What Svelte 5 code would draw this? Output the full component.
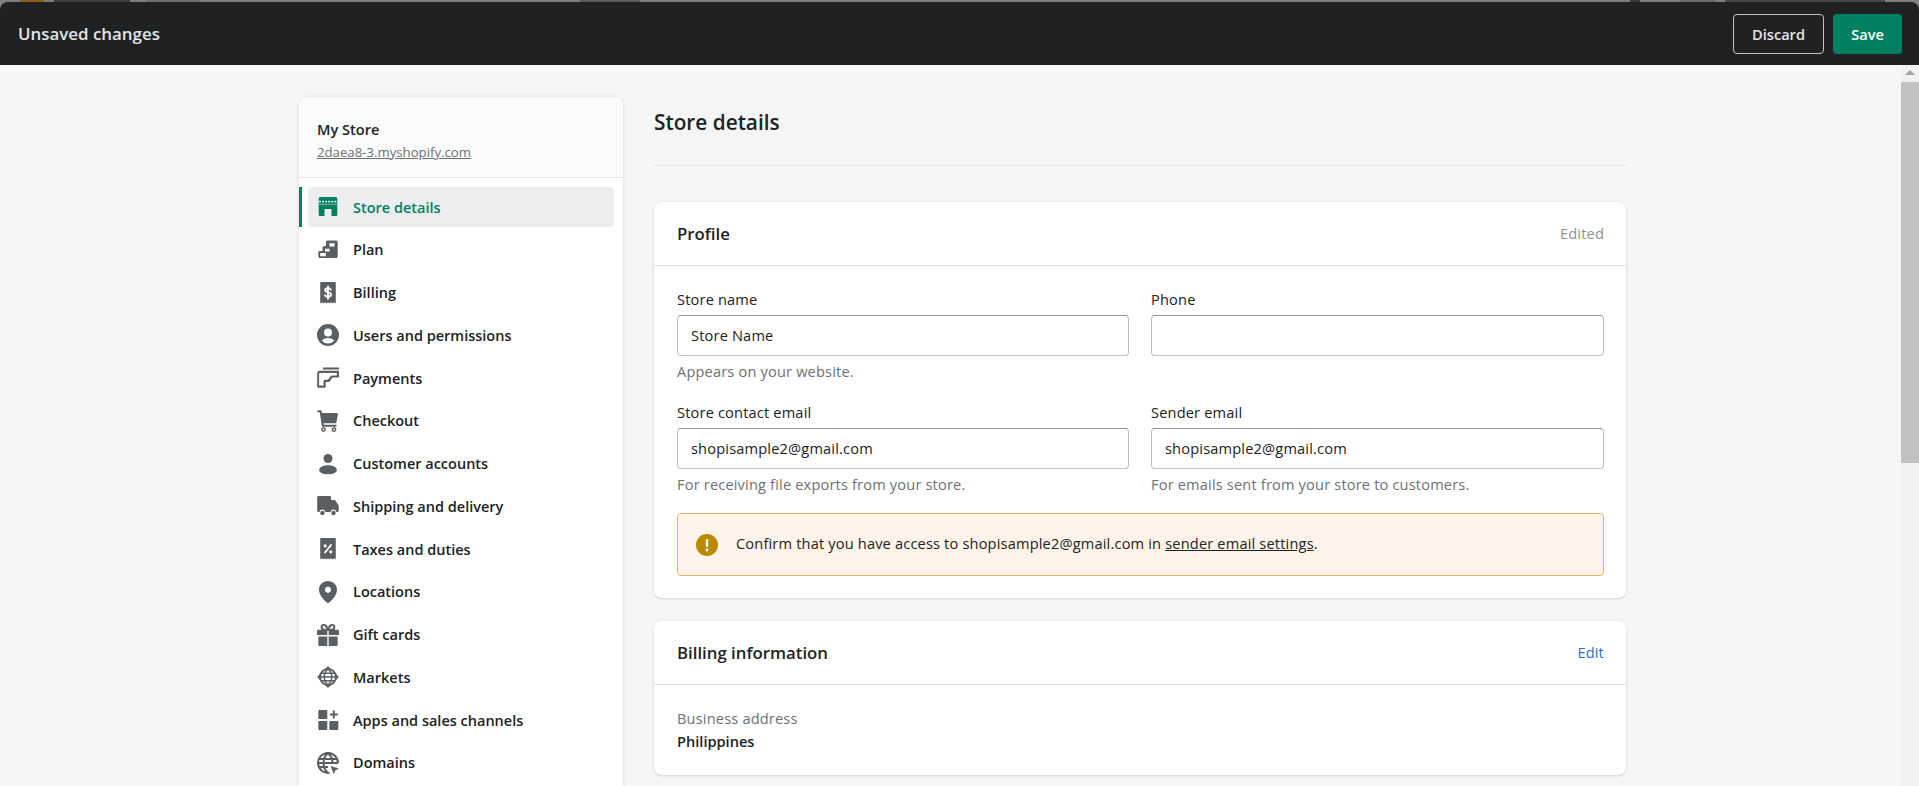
<script>
  const nav = [
    { label: 'Store details', icon: 'store', active: true },
    { label: 'Plan', icon: 'plan' },
    { label: 'Billing', icon: 'billing' },
    { label: 'Users and permissions', icon: 'users' },
    { label: 'Payments', icon: 'payments' },
    { label: 'Checkout', icon: 'cart' },
    { label: 'Customer accounts', icon: 'person' },
    { label: 'Shipping and delivery', icon: 'truck' },
    { label: 'Taxes and duties', icon: 'taxes' },
    { label: 'Locations', icon: 'pin' },
    { label: 'Gift cards', icon: 'gift' },
    { label: 'Markets', icon: 'markets' },
    { label: 'Apps and sales channels', icon: 'apps' },
    { label: 'Domains', icon: 'domains' }
  ];
</script>

<div class="page">
  <header class="top">
    <div class="bar">
      <span class="bar-title">Unsaved changes</span>
      <div class="actions">
        <button class="btn discard">Discard</button>
        <button class="btn save">Save</button>
      </div>
    </div>
  </header>

  <div class="under">
    <div class="content">
      <aside class="side">
        <div class="side-head">
          <div class="shop">My Store</div>
          <a class="shop-url" href="#top">2daea8-3.myshopify.com</a>
        </div>
        <nav class="nav">
          {#each nav as item}
            <a class="row" class:active={item.active} href="#top">
              <svg class="ico" viewBox="0 0 22 22" aria-hidden="true">
                {#if item.icon === 'store'}
                  <path d="M3.500 1h15a1.800 1.800 0 0 1 1.800 1.800v16a1.200 1.200 0 0 1-1.200 1.200h-4.600v-7h-7v7H2.900a1.200 1.200 0 0 1-1.200-1.200v-16A1.800 1.800 0 0 1 3.500 1z" />
                  <path class="notch" d="M2 5.600h18" />
                  <path class="gap" d="M2 8.300h18" />
                {:else if item.icon === 'plan'}
                  <path d="M10.600 1.500h8.600a1.500 1.500 0 0 1 1.500 1.500v14.500a1.500 1.500 0 0 1-1.500 1.500H2.800a1.500 1.500 0 0 1-1.500-1.500v-4a1.500 1.500 0 0 1 1-1.400V12h3.200V8.500a1.500 1.500 0 0 1 1.500-1.500H9V3a1.500 1.500 0 0 1 1.600-1.500z" />
                  <path class="cut" d="M12.500 4.300h5v3.200h-5zM8 9.800h4.500v2.600H8zM3.200 14h5.600v3.200H3.200z" />
                {:else if item.icon === 'billing'}
                  <path d="M4 0h14a.8.800 0 0 1 .8.800v20.700l-1.560-1.200-1.560 1.200-1.560-1.200-1.560 1.200-1.560-1.200-1.560 1.200-1.560-1.200-1.560 1.200-1.560-1.200-1.560 1.200V.8A.8.800 0 0 1 4 0z" />
                  <path class="cut-s" d="M13.800 7.600c-.5-.9-1.500-1.400-2.800-1.400-1.600 0-2.800.8-2.800 2.100 0 2.800 5.800 1.400 5.800 4.300 0 1.400-1.200 2.200-3 2.200-1.400 0-2.500-.6-3-1.500M11 4.400v12.400" />
                {:else if item.icon === 'users'}
                  <path fill-rule="evenodd" d="M11 0a11 11 0 1 1 0 22 11 11 0 0 1 0-22zm0 4.500a4 4 0 1 0 0 8 4 4 0 0 0 0-8zm0 15a8.500 8.500 0 0 0 6.300-2.800c-1-1.500-3.500-2.700-6.300-2.700s-5.300 1.200-6.300 2.700A8.500 8.500 0 0 0 11 19.500z" />
                {:else if item.icon === 'payments'}
                  <path d="M6 .5h16v2H6zM2.800 3.800H22v5.800c0 .6-.4 1-1 1h-4.300c-1 0-1.500.4-2 1l-1.600 2.300c-.5.700-1 1-1.900 1H8.700v4.800a1 1 0 0 1-1 1H1a.8.800 0 0 1-.8-.8V6.600a2.800 2.800 0 0 1 2.600-2.800z" />
                  <path class="cut" d="M3 6h16.800v2.500h-4.200c-1 0-1.900.5-2.500 1.300l-1.600 2.300c-.3.400-.6.600-1.200.6H8a1.500 1.500 0 0 0-1.500 1.500v4.200H2.100V7a1 1 0 0 1 .9-1z" />
                {:else if item.icon === 'cart'}
                  <path d="M1.200 .2h2.300c.6 0 1 .4 1.100 1l.3 1.900h15a1 1 0 0 1 1 1.200l-1.400 8a1 1 0 0 1-1 .9H6.600l.2 1.600h11.900a1 1 0 1 1 0 2H5.900a1 1 0 0 1-1-.9L2.700 2.200H1.200a1 1 0 0 1 0-2z" />
                  <path fill-rule="evenodd" d="M6.500 17.200a2.400 2.400 0 1 1 0 4.800 2.400 2.400 0 0 1 0-4.800zm0 1.500a.9.900 0 1 0 0 1.800.9.900 0 0 0 0-1.800zM17 17.200a2.400 2.400 0 1 1 0 4.800 2.400 2.400 0 0 1 0-4.800zm0 1.500a.9.900 0 1 0 0 1.800.9.900 0 0 0 0-1.800z" />
                {:else if item.icon === 'person'}
                  <circle cx="11" cy="5.500" r="4.500" />
                  <path d="M2.200 17c0-3 3.900-4.700 8.800-4.700s8.800 1.700 8.800 4.700c0 2.700-3.900 4.300-8.800 4.300S2.200 19.700 2.200 17z" />
                {:else if item.icon === 'truck'}
                  <path d="M1.500 1h11.200A1.300 1.300 0 0 1 14 2.300V5h3.300c.4 0 .8.200 1 .5l3.100 4.500c.2.300.3.600.3.900v4.800a1.300 1.300 0 0 1-1.300 1.300h-1a3 3 0 0 0-5.900 0H8.300a3 3 0 0 0-5.900 0H1.500A1.300 1.300 0 0 1 .2 15.700V2.300A1.300 1.300 0 0 1 1.500 1z" />
                  <circle cx="5.400" cy="18" r="2.200" />
                  <circle cx="16.500" cy="18" r="2.200" />
                {:else if item.icon === 'taxes'}
                  <path d="M4 0h14a.8.800 0 0 1 .8.800v20.700l-1.560-1.200-1.560 1.200-1.560-1.200-1.560 1.200-1.560-1.200-1.560 1.200-1.560-1.200-1.560 1.200-1.560-1.200-1.560 1.200V.8A.8.800 0 0 1 4 0z" />
                  <path class="cut-s" d="M14 7 8 14.500" />
                  <circle class="cut" cx="8.200" cy="7.800" r="1.600" />
                  <circle class="cut" cx="13.800" cy="13.800" r="1.600" />
                {:else if item.icon === 'pin'}
                  <path fill-rule="evenodd" d="M11 0c5 0 9 3.800 9 8.700 0 5.400-4.900 10.500-8.200 13a1.300 1.300 0 0 1-1.600 0C6.900 19.200 2 14.100 2 8.700 2 3.800 6 0 11 0zm0 5.800a3 3 0 1 0 0 6 3 3 0 0 0 0-6z" />
                {:else if item.icon === 'gift'}
                  <path d="M1 5.800h9.300V11H0V6.800a1 1 0 0 1 1-1zM11.700 5.800H21a1 1 0 0 1 1 1V11H11.700zM1.300 12.500h9V22H2.600a1.300 1.300 0 0 1-1.300-1.300zM11.700 12.500h9v8.200a1.300 1.300 0 0 1-1.300 1.300h-7.700z" />
                  <path class="line" d="M11 5.800C10 2.700 8.600 1 6.800 1 5.400 1 4.600 2 4.600 3.200c0 1.600 1.500 2.600 3.200 2.600H11c1-3.100 2.400-4.800 4.200-4.800 1.400 0 2.200 1 2.200 2.200 0 1.600-1.500 2.600-3.200 2.600z" />
                {:else if item.icon === 'markets'}
                  <circle class="line" cx="11" cy="11" r="8" />
                  <path d="M11 0l3.400 3.600h-6.800zM11 22l3.400-3.600h-6.800zM0 11l3.600-3.400v6.800zM22 11l-3.600-3.400v6.800z" />
                  <path class="thin" d="M2 11h18M3.800 7.200h14.400M3.800 14.800h14.400M11 3c2.700 2.300 3.800 5 3.800 8s-1.100 5.700-3.800 8c-2.700-2.300-3.800-5-3.800-8S8.300 5.300 11 3z" />
                {:else if item.icon === 'apps'}
                  <rect x="1.300" y="1" width="9" height="9" rx=".8" />
                  <rect x="1.300" y="12" width="9" height="9" rx=".8" />
                  <rect x="12.300" y="12" width="9" height="9" rx=".8" />
                  <path class="line" d="M16.800 1.500v8M12.800 5.500h8" />
                {:else if item.icon === 'domains'}
                  <path class="line" d="M12.500 20.800A10 10 0 1 1 21 11M1 11h20M1.800 7h18.400M1.800 15h9.200M11 1c3.200 2.800 4.500 6 4.500 10M11 1C7.800 3.800 6.500 7 6.500 11s1.300 7.200 4.500 10" />
                  <path d="m13.500 14 8.500 2.600-3.500 1.700-1.700 3.700z" />
                {/if}
              </svg>
              <span>{item.label}</span>
            </a>
          {/each}
        </nav>
      </aside>

      <main class="main">
        <h1 class="title">Store details</h1>
        <hr class="rule" />

        <section class="card">
          <div class="card-head">
            <h2>Profile</h2>
            <span class="edited">Edited</span>
          </div>
          <div class="card-body">
            <div class="grid">
              <div class="field">
                <div class="label">Store name</div>
                <div class="input">Store Name</div>
                <div class="help">Appears on your website.</div>
              </div>
              <div class="field">
                <div class="label">Phone</div>
                <div class="input"></div>
              </div>
              <div class="field">
                <div class="label">Store contact email</div>
                <div class="input">shopisample2@gmail.com</div>
                <div class="help">For receiving file exports from your store.</div>
              </div>
              <div class="field">
                <div class="label">Sender email</div>
                <div class="input">shopisample2@gmail.com</div>
                <div class="help">For emails sent from your store to customers.</div>
              </div>
            </div>
            <div class="alert">
              <svg class="alert-ico" viewBox="0 0 22 22" aria-hidden="true">
                <circle cx="11" cy="11" r="11" />
                <rect class="mark" x="9.800" y="5" width="2.400" height="8" rx="1.200" />
                <circle class="mark" cx="11" cy="16" r="1.400" />
              </svg>
              <p>Confirm that you have access to shopisample2@gmail.com in <a href="#top">sender email settings</a>.</p>
            </div>
          </div>
        </section>

        <section class="card second">
          <div class="card-head">
            <h2>Billing information</h2>
            <a class="edit" href="#top">Edit</a>
          </div>
          <div class="card-body billing">
            <div class="muted">Business address</div>
            <div class="strong">Philippines</div>
          </div>
        </section>
      </main>
    </div>

    <div class="scroll">
      <div class="arrow"></div>
      <div class="thumb"></div>
    </div>
  </div>
</div>

<style>
  :global(body) {
    margin: 0;
    background: #f6f6f7;
    overflow: hidden;
  }
  .page {
    height: 786px;
    display: flex;
    flex-direction: column;
    overflow: hidden;
    font-family: "Open Sans", "Noto Sans", "Liberation Sans", sans-serif;
    font-size: 14.600px;
    letter-spacing: 0.17px;
    color: #202223;
  }
  .top {
    flex: none;
    padding-top: 2px;
    background: linear-gradient(90deg, #7f7f7f 0 20px, #8a5e12 20px 44px, #7f7f7f 44px 54px, #3c3c3c 54px 130px, #7f7f7f 130px 146px, #6f6f6f 146px 200px, #7f7f7f 200px 580px, #5a5a5a 580px 640px, #7f7f7f 640px 1630px, #3a3a3a 1630px 1640px, #7f7f7f 1640px 1680px, #6a6a6a 1680px 1715px, #7f7f7f 1715px 1725px, #474747 1725px 1885px, #7f7f7f 1885px);
  }
  .bar {
    height: 63px;
    box-sizing: border-box;
    background: #202123;
    border-radius: 8px 8px 0 0;
    padding: 0 17px 0 18px;
    display: flex;
    align-items: center;
    justify-content: space-between;
  }
  .bar-title {
    color: #e3e5e7;
    font-size: 16.900px;
    letter-spacing: 0;
    font-weight: 600;
  }
  .actions {
    display: flex;
    gap: 9px;
  }
  .btn {
    height: 40px;
    box-sizing: border-box;
    border-radius: 4px;
    font: 600 14.600px "Open Sans", "Noto Sans", sans-serif;
    padding: 0;
  }
  .discard {
    width: 91px;
    background: transparent;
    border: 1px solid #c4c5c7;
    color: #e3e5e7;
  }
  .save {
    width: 69px;
    background: #008060;
    border: 0;
    color: #fff;
  }
  .under {
    flex: 1;
    min-height: 0;
    display: flex;
  }
  .content {
    flex: 1;
    min-width: 0;
    display: flex;
    align-items: flex-start;
    gap: 31px;
    padding: 32px 0 0 299px;
    overflow: hidden;
  }
  .side {
    flex: none;
    width: 324px;
    background: #fff;
    border-radius: 8px 8px 0 0;
    box-shadow: 0 0 5px rgba(23, 24, 24, 0.08), 0 1px 2px rgba(0, 0, 0, 0.1);
  }
  .side-head {
    height: 81px;
    box-sizing: border-box;
    padding: 22px 18px 0;
    background: #fafbfb;
    border-bottom: 1px solid #e1e3e5;
    border-radius: 8px 8px 0 0;
  }
  .shop {
    font-weight: 600;
    letter-spacing: 0;
    line-height: 20px;
  }
  .shop-url {
    display: block;
    margin-top: 3.600px;
    font-size: 13.200px;
    letter-spacing: 0;
    line-height: 18px;
    color: #6d7175;
    text-decoration: underline;
  }
  .nav {
    padding-top: 9px;
  }
  .row {
    position: relative;
    display: flex;
    align-items: center;
    gap: 14px;
    height: 40px;
    margin: 0 9px 2.750px 9px;
    padding-left: 9px;
    border-radius: 4px;
    color: #202223;
    font-size: 14.500px;
    font-weight: 600;
    letter-spacing: 0;
    text-decoration: none;
  }
  .row.active {
    background: #edeeef;
    color: #008060;
  }
  .row.active::before {
    content: "";
    position: absolute;
    left: -9px;
    top: 0;
    bottom: 0;
    width: 3px;
    background: #008060;
  }
  .ico {
    flex: none;
    width: 22px;
    height: 22px;
    fill: #5c5f62;
  }
  .active .ico {
    fill: #008060;
  }
  .cut {
    fill: #fff;
  }
  .notch {
    fill: none;
    stroke: #edeeef;
    stroke-width: 1.600;
    stroke-dasharray: 1.800 1.300;
  }
  .gap {
    fill: none;
    stroke: #edeeef;
    stroke-width: 0.500;
  }
  .cut-s {
    fill: none;
    stroke: #fff;
    stroke-width: 1.900;
    stroke-linecap: round;
  }
  .line {
    fill: none;
    stroke: #5c5f62;
    stroke-width: 2;
  }
  .thin {
    fill: none;
    stroke: #5c5f62;
    stroke-width: 1.400;
  }
  .main {
    flex: none;
    width: 972px;
  }
  .title {
    margin: 0;
    padding-top: 12px;
    font-size: 20.800px;
    letter-spacing: 0;
    line-height: 26px;
    font-weight: 600;
  }
  .rule {
    margin: 30px 0 36px;
    border: 0;
    border-top: 1px solid #e1e3e5;
  }
  .card {
    background: #fff;
    border-radius: 8px;
    box-shadow: 0 0 5px rgba(23, 24, 24, 0.06), 0 1px 2px rgba(0, 0, 0, 0.12);
  }
  .second {
    margin-top: 23px;
  }
  .card-head {
    height: 64px;
    box-sizing: border-box;
    padding: 0 22px 1px 23px;
    border-bottom: 1px solid #e1e3e5;
    display: flex;
    align-items: center;
    justify-content: space-between;
  }
  h2 {
    margin: 0;
    font-size: 16.800px;
    letter-spacing: 0;
    font-weight: 600;
  }
  .edited {
    color: #8c9196;
  }
  .edit {
    color: #2c6ecb;
    text-decoration: none;
  }
  .card-body {
    padding: 23px 22px 22px 23px;
  }
  .grid {
    display: grid;
    grid-template-columns: 452px 453px;
    column-gap: 22px;
    row-gap: 21px;
  }
  .label {
    line-height: 20px;
    margin-bottom: 6px;
  }
  .input {
    height: 40.600px;
    box-sizing: border-box;
    border: 1px solid #babfc3;
    border-top-color: #8c9196;
    border-radius: 4px;
    padding: 0 13px;
    display: flex;
    align-items: center;
    color: #202223;
  }
  .help {
    margin-top: 5.400px;
    line-height: 20px;
    color: #6d7175;
  }
  .alert {
    height: 63px;
    box-sizing: border-box;
    margin-top: 19.200px;
    padding-left: 18px;
    display: flex;
    align-items: center;
    gap: 18px;
    background: #fff4ea;
    border: 1px solid #e6b671;
    border-radius: 4px;
  }
  .alert p {
    margin: 0;
    padding-bottom: 3px;
  }
  .alert a {
    color: #202223;
  }
  .alert-ico {
    flex: none;
    width: 22px;
    height: 22px;
    fill: #b98900;
  }
  .mark {
    fill: #fff;
  }
  .billing {
    height: 90px;
    box-sizing: border-box;
    padding-top: 22px;
  }
  .muted {
    color: #6d7175;
    line-height: 22px;
  }
  .strong {
    font-weight: 600;
    letter-spacing: 0;
    line-height: 24px;
  }
  .scroll {
    flex: none;
    width: 18px;
    background: #f1f1f1;
    display: flex;
    flex-direction: column;
  }
  .arrow {
    height: 17px;
    box-sizing: border-box;
    display: flex;
    justify-content: center;
    padding-top: 5px;
  }
  .arrow::before {
    content: "";
    width: 0;
    height: 0;
    border: 5px solid transparent;
    border-top: 0;
    border-bottom: 5px solid #a3a3a3;
  }
  .thumb {
    height: 381px;
    background: #c1c1c1;
  }
</style>
